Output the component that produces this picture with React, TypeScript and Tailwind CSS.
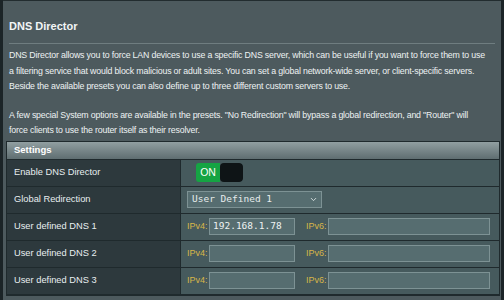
import { ChevronDown } from "lucide-react";

const rowLabel = "px-[7px] flex items-center text-[9.3px] text-[#e8eef0] bg-[#2d393d] border-r border-[#1f2a2d]";

function DnsInputs({ v4 }: { v4?: string }) {
  return (
    <div className="flex items-center pl-[6px] bg-[#465a5d]">
      <span className="text-[9px] text-[#d6b648] w-[22px]">IPv4:</span>
      <div className="w-[86px] h-[17px] bg-[#566d70] border border-[#7d9294] px-[3px] flex items-center font-['DejaVu_Sans_Mono',monospace] text-[9.5px] text-[#eef2f2]">
        {v4}
      </div>
      <span className="text-[9px] text-[#d6b648] w-[22px] ml-[11px]">IPv6:</span>
      <div className="w-[162px] h-[17px] bg-[#566d70] border border-[#7d9294]" />
    </div>
  );
}

export default function App() {
  return (
    <div className="w-[504px] h-[300px] overflow-hidden bg-[#1b2427] flex font-['Liberation_Sans',Arial,sans-serif]">
      <div className="ml-[3px] w-[498px] h-full bg-[#4d5a5e] border-t border-[#222c2f] flex flex-col">
        <div className="px-[6px] pt-[18px]">
          <h1 className="text-[11px] font-bold text-[#f2f5f6] leading-[14px]">DNS Director</h1>
          <div className="mt-[10px] h-px bg-[#6f7d80]" />
          <div className="mt-[4px] text-[8.8px] tracking-[-0.18px] leading-[15.5px] text-[#eef2f3] whitespace-nowrap">
            <p>
              DNS Director allows you to force LAN devices to use a specific DNS server, which can be useful if you want to force them to use
              <br />
              a filtering service that would block malicious or adult sites. You can set a global network-wide server, or client-specific servers.
              <br />
              Beside the available presets you can also define up to three different custom servers to use.
            </p>
            <p className="mt-[13px]">
              A few special System options are available in the presets. "No Redirection" will bypass a global redirection, and "Router" will
              <br />
              force clients to use the router itself as their resolver.
            </p>
          </div>
        </div>

        <div className="mt-[2px] ml-[3px] w-[494px] border border-[#1f2a2d]">
          <div className="h-[18px] px-[7px] flex items-center text-[9.5px] font-bold text-white bg-gradient-to-b from-[#919fa1] to-[#5f6e71] border-b border-[#1f2a2d]">
            Settings
          </div>
          <div className="grid grid-cols-[174px_1fr] [&>*]:h-[27px] [&>*]:border-b [&>*]:border-[#1f2a2d]">
            <div className={rowLabel}>Enable DNS Director</div>
            <div className="flex items-center pl-[15px] bg-[#465a5d]">
              <div className="flex h-[19px] rounded-[3px] overflow-hidden">
                <div className="w-[24px] bg-[#15a443] text-white text-[10.5px] flex items-center justify-center">ON</div>
                <div className="w-[23px] bg-[#0e1416] rounded-[4px]" />
              </div>
            </div>

            <div className={rowLabel}>Global Redirection</div>
            <div className="flex items-center pl-[6px] bg-[#465a5d]">
              <div className="w-[135px] h-[17px] bg-[#566d70] border border-[#7d9294] pl-[4px] pr-[3px] flex items-center justify-between font-['DejaVu_Sans_Mono',monospace] text-[9.5px] text-[#e6ecec]">
                <span>User Defined 1</span>
                <ChevronDown className="w-[9px] h-[9px] text-[#d8e0e0]" strokeWidth={2.5} />
              </div>
            </div>

            <div className={rowLabel}>User defined DNS 1</div>
            <DnsInputs v4="192.168.1.78" />

            <div className={rowLabel}>User defined DNS 2</div>
            <DnsInputs />

            <div className={rowLabel}>User defined DNS 3</div>
            <DnsInputs />
          </div>
        </div>
      </div>
    </div>
  );
}
